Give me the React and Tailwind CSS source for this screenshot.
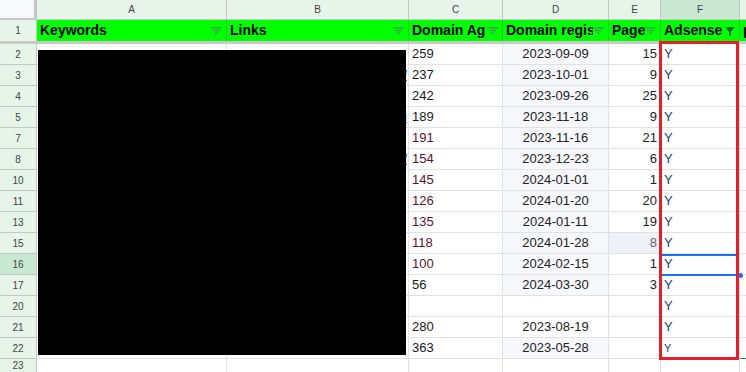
import React from 'react';

const cols = [
  { key: 'A', w: 'w-[190px]' },
  { key: 'B', w: 'w-[182px]' },
  { key: 'C', w: 'w-[94px]' },
  { key: 'D', w: 'w-[106px]' },
  { key: 'E', w: 'w-[52px]' },
  { key: 'F', w: 'w-[79px]' },
];

const headers = ['Keywords', 'Links', 'Domain Ag', 'Domain regis', 'Page', 'Adsense'];

// row number, domain age, registered, page, adsense, link fragment
const rows = [
  ['2', '259', '2023-09-09', '15', 'Y', ''],
  ['3', '237', '2023-10-01', '9', 'Y', '/'],
  ['4', '242', '2023-09-26', '25', 'Y', ''],
  ['5', '189', '2023-11-18', '9', 'Y', 'u'],
  ['7', '191', '2023-11-16', '21', 'Y', ''],
  ['8', '154', '2023-12-23', '6', 'Y', '/'],
  ['10', '145', '2024-01-01', '1', 'Y', ''],
  ['11', '126', '2024-01-20', '20', 'Y', ''],
  ['13', '135', '2024-01-11', '19', 'Y', ''],
  ['15', '118', '2024-01-28', '8', 'Y', ''],
  ['16', '100', '2024-02-15', '1', 'Y', ''],
  ['17', '56', '2024-03-30', '3', 'Y', ''],
  ['20', '', '', '', 'Y', ''],
  ['21', '280', '2023-08-19', '', 'Y', ''],
  ['22', '363', '2023-05-28', '', 'Y', ''],
];

const maroon = ['7', '8', '10', '11', '13', '15', '16'];

const FilterLines = () => (
  <svg width="11" height="7" viewBox="0 0 11 7" className="shrink-0">
    <rect x="0" y="0" width="11" height="1.6" fill="#3aa84a" />
    <rect x="2" y="2.7" width="7" height="1.6" fill="#3aa84a" />
    <rect x="4" y="5.4" width="3" height="1.6" fill="#3aa84a" />
  </svg>
);

const FilterOn = () => (
  <svg width="10" height="10" viewBox="0 0 10 10" className="shrink-0">
    <path d="M0 1h10L6 5.5V10H4V5.5z" fill="#146c2e" />
  </svg>
);

export default function App() {
  return (
    <div
      className="relative w-[746px] h-[372px] overflow-hidden bg-white text-[13px] text-[#222]"
      style={{ fontFamily: '"Liberation Sans", Arial, sans-serif' }}
    >
      {/* column letters */}
      <div className="flex h-[20px]">
        <div className="w-[37px] shrink-0 bg-[#f8f9fa] border-r-[3px] border-b-[2px] border-[#c4c7c5]" />
        {cols.map((c) => (
          <div
            key={c.key}
            className={`${c.w} shrink-0 flex items-center justify-center border-r border-b border-[#c4c7c5] text-[10px] text-[#444] ${
              c.key === 'F' ? 'bg-[#c9e8d2]' : 'bg-[#e6f4ea]'
            }`}
          >
            {c.key}
          </div>
        ))}
        <div className="flex-1 bg-[#e6f4ea] border-b border-[#c4c7c5]" />
      </div>

      {/* header row */}
      <div className="flex h-[21px]">
        <div className="w-[37px] shrink-0 flex items-center justify-center bg-[#e6f4ea] border-r border-[#c4c7c5] text-[10px] text-[#444]">
          1
        </div>
        {cols.map((c, i) => (
          <div
            key={c.key}
            className={`${c.w} shrink-0 flex items-center justify-between pl-[3px] pr-[4px] bg-[#00ff00] border-r border-[#23c91f] font-bold text-[14px] text-black overflow-hidden whitespace-nowrap`}
          >
            <span className="overflow-hidden">{headers[i]}</span>
            {c.key === 'F' ? <FilterOn /> : <FilterLines />}
          </div>
        ))}
        <div className="flex-1 bg-[#00ff00] pl-[3px] font-bold text-[14px] text-black">p</div>
      </div>

      {/* frozen divider */}
      <div className="h-[3px] bg-[#c7c9c7]" />

      {/* data rows */}
      {rows.map(([n, age, reg, page, ad, link], idx) => (
        <div key={n} className="flex h-[21px]">
          <div
            className={`w-[37px] shrink-0 flex items-center justify-center border-r border-b border-[#c4c7c5] text-[10px] text-[#444] ${
              n === '16' ? 'bg-[#c9e8d2]' : 'bg-[#e6f4ea]'
            }`}
          >
            {n}
          </div>
          <div className="w-[190px] shrink-0 border-r border-b border-[#e2e2e2]" />
          <div className="w-[182px] shrink-0 flex items-center justify-end pr-[1px] border-r border-b border-[#e2e2e2] text-[#1155cc] underline">
            {link}
          </div>
          <div
            className={`w-[94px] shrink-0 flex items-center pl-[3px] border-r border-b border-[#e2e2e2] ${
              maroon.includes(n) ? 'text-[#5a1230]' : 'text-[#1a1a1a]'
            }`}
          >
            {age}
          </div>
          <div
            className={`w-[106px] shrink-0 flex items-center justify-center border-r border-b border-[#e2e2e2] ${
              n === '20' || n === '21' ? 'bg-white' : 'bg-[#f6f8fc]'
            }`}
          >
            {reg}
          </div>
          <div
            className={`w-[52px] shrink-0 flex items-center justify-end pr-[3px] border-r border-b border-[#e2e2e2] ${
              n === '15' ? 'bg-[#eef1f7] text-[#666]' : ''
            }`}
          >
            {page}
          </div>
          <div
            className={`w-[79px] shrink-0 flex items-center pl-[3px] border-r border-b border-[#e2e2e2] text-[#17407a] ${
              n === '22' ? 'text-[11px]' : ''
            }`}
          >
            {ad}
          </div>
          <div className={`flex-1 border-b ${idx === rows.length - 1 ? 'border-[#1e8e3e]' : 'border-[#e2e2e2]'}`} />
        </div>
      ))}

      {/* row 23 */}
      <div className="flex h-[20px] border-t border-[#1e8e3e] -mt-[1px]">
        <div className="w-[37px] shrink-0 flex items-start justify-center pt-[1px] leading-[12px] bg-[#e6f4ea] border-r border-[#c4c7c5] text-[10px] text-[#444]">
          23
        </div>
        <div className="w-[190px] shrink-0 border-r border-[#e2e2e2]" />
        <div className="w-[182px] shrink-0 border-r border-[#e2e2e2]" />
        <div className="w-[94px] shrink-0 border-r border-[#e2e2e2]" />
        <div className="w-[106px] shrink-0 border-r border-[#e2e2e2]" />
        <div className="w-[52px] shrink-0 border-r border-[#e2e2e2]" />
        <div className="w-[79px] shrink-0 border-r border-[#e2e2e2]" />
      </div>

      {/* redaction */}
      <div className="absolute left-[38px] top-[50px] w-[368px] h-[305px] bg-black" />

      {/* selection on F16 */}
      <div className="absolute left-[660px] top-[254px] w-[79px] h-[22px] border-2 border-[#1a73e8]" />
      <div className="absolute left-[736px] top-[254px] w-[3px] h-[22px] bg-[#1a73e8]" />
      <div className="absolute left-[737px] top-[272px] w-[7px] h-[7px] rounded-full bg-[#1a73e8] border border-white" />

      {/* red highlight box */}
      <div className="absolute left-[659px] top-[41px] w-[80px] h-[319px] border-[3px] border-[#e3202a]" />
    </div>
  );
}
